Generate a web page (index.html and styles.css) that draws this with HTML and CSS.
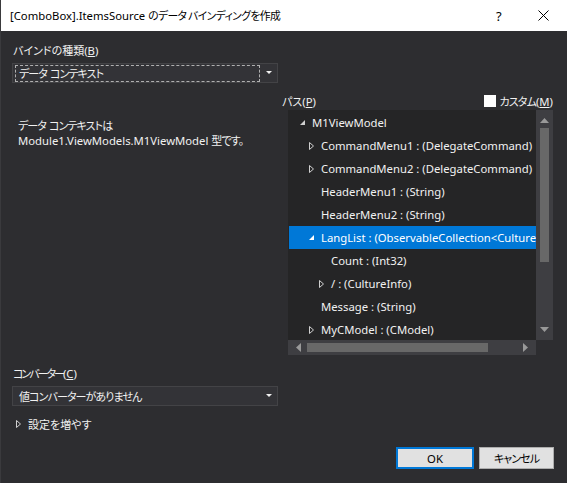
FILE: index.html
```html
<!DOCTYPE html>
<html lang="ja">
<head>
  <meta charset="UTF-8">
  <title>データ バインディングを作成</title>
  <link rel="stylesheet" href="styles.css">
</head>
<body>
  <div class="dialog">
    <div class="titlebar">
      <span class="title">[ComboBox].ItemsSource <span class="ja ja-title">のデータ バインディングを作成</span></span>
      <span class="help">?</span>
      <svg class="close" width="11" height="11" viewBox="0 0 11 11">
        <path d="M0.5 0.5 L10.5 10.5 M10.5 0.5 L0.5 10.5" stroke="#000" stroke-width="1"/>
      </svg>
    </div>

    <div class="content">
      <div class="left">
        <div class="label"><span class="ja">バインドの種類</span>(<u>B</u>)</div>
        <div class="combo">
          <span class="combo-text focus"><span class="ja ja-tight">データ</span> <span class="ja ja-tight">コンテキスト</span></span>
          <svg class="drop" width="6" height="4" viewBox="0 0 6 4"><path d="M0 0 H6 L3 3 Z" fill="#f1f1f1"/></svg>
        </div>
        <p class="desc"><span class="ja ja-tight">データ</span> <span class="ja ja-tight">コンテキストは</span><br>Module1.ViewModels.M1ViewModel <span class="ja ja-tight">型です。</span></p>

        <div class="label converter-label"><span class="ja ja-narrow">コンバーター</span>(<u>C</u>)</div>
        <div class="combo">
          <span class="combo-text"><span class="ja ja-tight">値コンバーターがありません</span></span>
          <svg class="drop" width="6" height="4" viewBox="0 0 6 4"><path d="M0 0 H6 L3 3 Z" fill="#f1f1f1"/></svg>
        </div>
        <div class="more">
          <svg class="arrow" width="6" height="8" viewBox="0 0 6 8"><path d="M0.5 0.5 L4.5 4 L0.5 7.5 Z" fill="none" stroke="#d0d0d0"/></svg>
          <span class="ja">設定を増やす</span>
        </div>
      </div>

      <div class="right">
        <div class="path-head">
          <span><span class="ja">パス</span>(<u>P</u>)</span>
          <span class="custom"><span class="check"></span><span><span class="ja ja-tight">カスタム</span>(<u>M</u>)</span></span>
        </div>
        <div class="tree">
          <div class="tree-main">
            <div class="tree-rows">
              <div class="row lvl0"><svg class="arrow" width="6" height="6" viewBox="0 0 6 6"><path d="M5 0 V5 H0 Z" fill="#d0d0d0"/></svg><span>M1ViewModel</span></div>
              <div class="row lvl1"><svg class="arrow" width="6" height="8" viewBox="0 0 6 8"><path d="M0.5 0.5 L4.5 4 L0.5 7.5 Z" fill="none" stroke="#d0d0d0"/></svg><span>CommandMenu1 : (DelegateCommand)</span></div>
              <div class="row lvl1"><svg class="arrow" width="6" height="8" viewBox="0 0 6 8"><path d="M0.5 0.5 L4.5 4 L0.5 7.5 Z" fill="none" stroke="#d0d0d0"/></svg><span>CommandMenu2 : (DelegateCommand)</span></div>
              <div class="row lvl1"><span class="arrow"></span><span>HeaderMenu1 : (String)</span></div>
              <div class="row lvl1"><span class="arrow"></span><span>HeaderMenu2 : (String)</span></div>
              <div class="row lvl1 selected"><svg class="arrow" width="6" height="6" viewBox="0 0 6 6"><path d="M5 0 V5 H0 Z" fill="#ffffff"/></svg><span>LangList : (ObservableCollection&lt;CultureInfo&gt;)</span></div>
              <div class="row lvl2"><span class="arrow"></span><span>Count : (Int32)</span></div>
              <div class="row lvl2"><svg class="arrow" width="6" height="8" viewBox="0 0 6 8"><path d="M0.5 0.5 L4.5 4 L0.5 7.5 Z" fill="none" stroke="#d0d0d0"/></svg><span>/ : (CultureInfo)</span></div>
              <div class="row lvl1"><span class="arrow"></span><span>Message : (String)</span></div>
              <div class="row lvl1"><svg class="arrow" width="6" height="8" viewBox="0 0 6 8"><path d="M0.5 0.5 L4.5 4 L0.5 7.5 Z" fill="none" stroke="#d0d0d0"/></svg><span>MyCModel : (CModel)</span></div>
              <div class="row lvl1"><span class="arrow"></span><span>Title : (String)</span></div>
            </div>
            <div class="vscroll">
              <svg class="sb-btn" width="9" height="5" viewBox="0 0 9 5"><path d="M0 5 L4.5 0 L9 5 Z" fill="#999"/></svg>
              <div class="vtrack"><div class="vthumb"></div></div>
              <svg class="sb-btn" width="9" height="5" viewBox="0 0 9 5"><path d="M0 0 L4.5 5 L9 0 Z" fill="#999"/></svg>
            </div>
          </div>
          <div class="hscroll">
            <svg class="sb-btn" width="5" height="9" viewBox="0 0 5 9"><path d="M5 0 L0 4.5 L5 9 Z" fill="#999"/></svg>
            <div class="htrack"><div class="hthumb"></div></div>
            <svg class="sb-btn" width="5" height="9" viewBox="0 0 5 9"><path d="M0 0 L5 4.5 L0 9 Z" fill="#999"/></svg>
            <div class="corner"></div>
          </div>
        </div>
      </div>
    </div>

    <div class="buttons">
      <button class="btn btn-default">OK</button>
      <button class="btn btn-cancel"><span class="ja ja-tight">キャンセル</span></button>
    </div>
  </div>
</body>
</html>
```

FILE: styles.css
```css
:root {
  --bg: #2d2d30;
  --text: #f1f1f1;
  --combo-bg: #333337;
  --combo-border: #434346;
  --tree-bg: #252526;
  --track: #3e3e42;
  --thumb: #686868;
  --select: #0078d7;
}

* {
  margin: 0;
  padding: 0;
  box-sizing: border-box;
}

body {
  width: 567px;
  height: 483px;
  overflow: hidden;
  font-family: "Noto Sans", "Noto Sans CJK JP", sans-serif;
  font-size: 11.3px;
  color: var(--text);
  background: var(--bg);
}

/* Japanese runs: narrower, like Yu Gothic UI */
.ja {
  font-family: "Noto Sans CJK JP", sans-serif;
  font-size: 11px;
  font-feature-settings: "palt";
}

.ja-tight {
  letter-spacing: -0.9px;
}

.ja-narrow {
  letter-spacing: -2px;
}

.ja-title {
  font-size: 10.8px;
  letter-spacing: -0.6px;
}

.dialog {
  display: flex;
  flex-direction: column;
  height: 483px;
  background: var(--bg);
  border-left: 1px solid #3a3a3d;
}

/* Title bar */
.titlebar {
  display: flex;
  align-items: center;
  height: 31px;
  background: #ffffff;
  color: #000;
  padding-left: 9px;
}

.title {
  flex: 1;
  line-height: 16px;
}

.help {
  width: 12px;
  margin-right: 30px;
  font-size: 13px;
}

.close {
  margin-right: 18px;
}

/* Content */
.content {
  display: grid;
  grid-template-columns: 266px 271px;
  column-gap: 4px;
  padding: 11px 0 0 11px;
}

.label {
  line-height: 16px;
  height: 16px;
  padding-left: 1px;
}

.combo {
  display: flex;
  align-items: center;
  height: 20px;
  margin-top: 5px;
  padding: 0 2px;
  background: var(--combo-bg);
  border: 1px solid var(--combo-border);
}

.combo-text {
  flex: 1;
  line-height: 14px;
  padding: 0 3px;
  border: 1px solid transparent;
  margin-right: 6px;
  white-space: nowrap;
}

.combo-text.focus {
  border: 1px dashed #b0b0b0;
}

.drop {
  margin-right: 3px;
}

.desc {
  margin-top: 35px;
  padding-left: 6px;
  line-height: 15px;
}

.converter-label {
  margin-top: 217px;
}

.more {
  display: flex;
  align-items: center;
  gap: 6px;
  margin-top: 10px;
  padding-left: 4px;
  line-height: 16px;
}

/* Path tree */
.right {
  margin-top: 50px;
}

.path-head {
  display: flex;
  justify-content: space-between;
  align-items: center;
  height: 18px;
}

.custom {
  display: flex;
  align-items: center;
  gap: 4px;
}

.check {
  width: 12px;
  height: 12px;
  background: #fff;
}

.tree {
  height: 245px;
  margin-left: 6px;
  width: 265px;
  background: var(--tree-bg);
  display: flex;
  flex-direction: column;
}

.tree-main {
  flex: 1;
  display: flex;
  min-height: 0;
}

.tree-rows {
  flex: 1;
  overflow: hidden;
  padding-top: 1px;
}

.row {
  display: flex;
  align-items: center;
  height: 23px;
  white-space: nowrap;
  margin-left: 1px;
}

.row .arrow {
  flex: none;
  width: 12px;
}

.row svg.arrow {
  width: 6px;
  margin-right: 6px;
}

.lvl0 { padding-left: 11px; }
.lvl1 { padding-left: 20px; }
.lvl2 { padding-left: 30px; }

.row.selected {
  background: var(--select);
  color: #fff;
}

.vscroll {
  width: 17px;
  background: var(--track);
  display: flex;
  flex-direction: column;
  align-items: center;
  padding: 8px 0;
}

.vtrack {
  flex: 1;
  width: 9px;
  padding: 5px 0 65px;
  display: flex;
}

.vthumb {
  flex: 1;
  background: var(--thumb);
}

.hscroll {
  height: 15px;
  display: flex;
  align-items: center;
  background: var(--track);
  padding-left: 8px;
}

.htrack {
  width: 222px;
  height: 9px;
  padding: 0 35px 0 6px;
  display: flex;
}

.hthumb {
  flex: 1;
  background: var(--thumb);
}

.corner {
  margin-left: auto;
  width: 17px;
  height: 15px;
  background: var(--bg);
}

/* Buttons */
.buttons {
  display: flex;
  justify-content: flex-end;
  gap: 5px;
  margin-top: auto;
  margin-bottom: 14px;
  padding-right: 13px;
}

.btn {
  height: 22px;
  font-family: "Noto Sans", "Noto Sans CJK JP", sans-serif;
  font-size: 11.3px;
  color: #000;
  background: #e1e1e1;
  border: 1px solid #adadad;
}

.btn-default {
  width: 78px;
  border: 2px solid #0078d7;
}

.btn-cancel {
  width: 75px;
}
```
